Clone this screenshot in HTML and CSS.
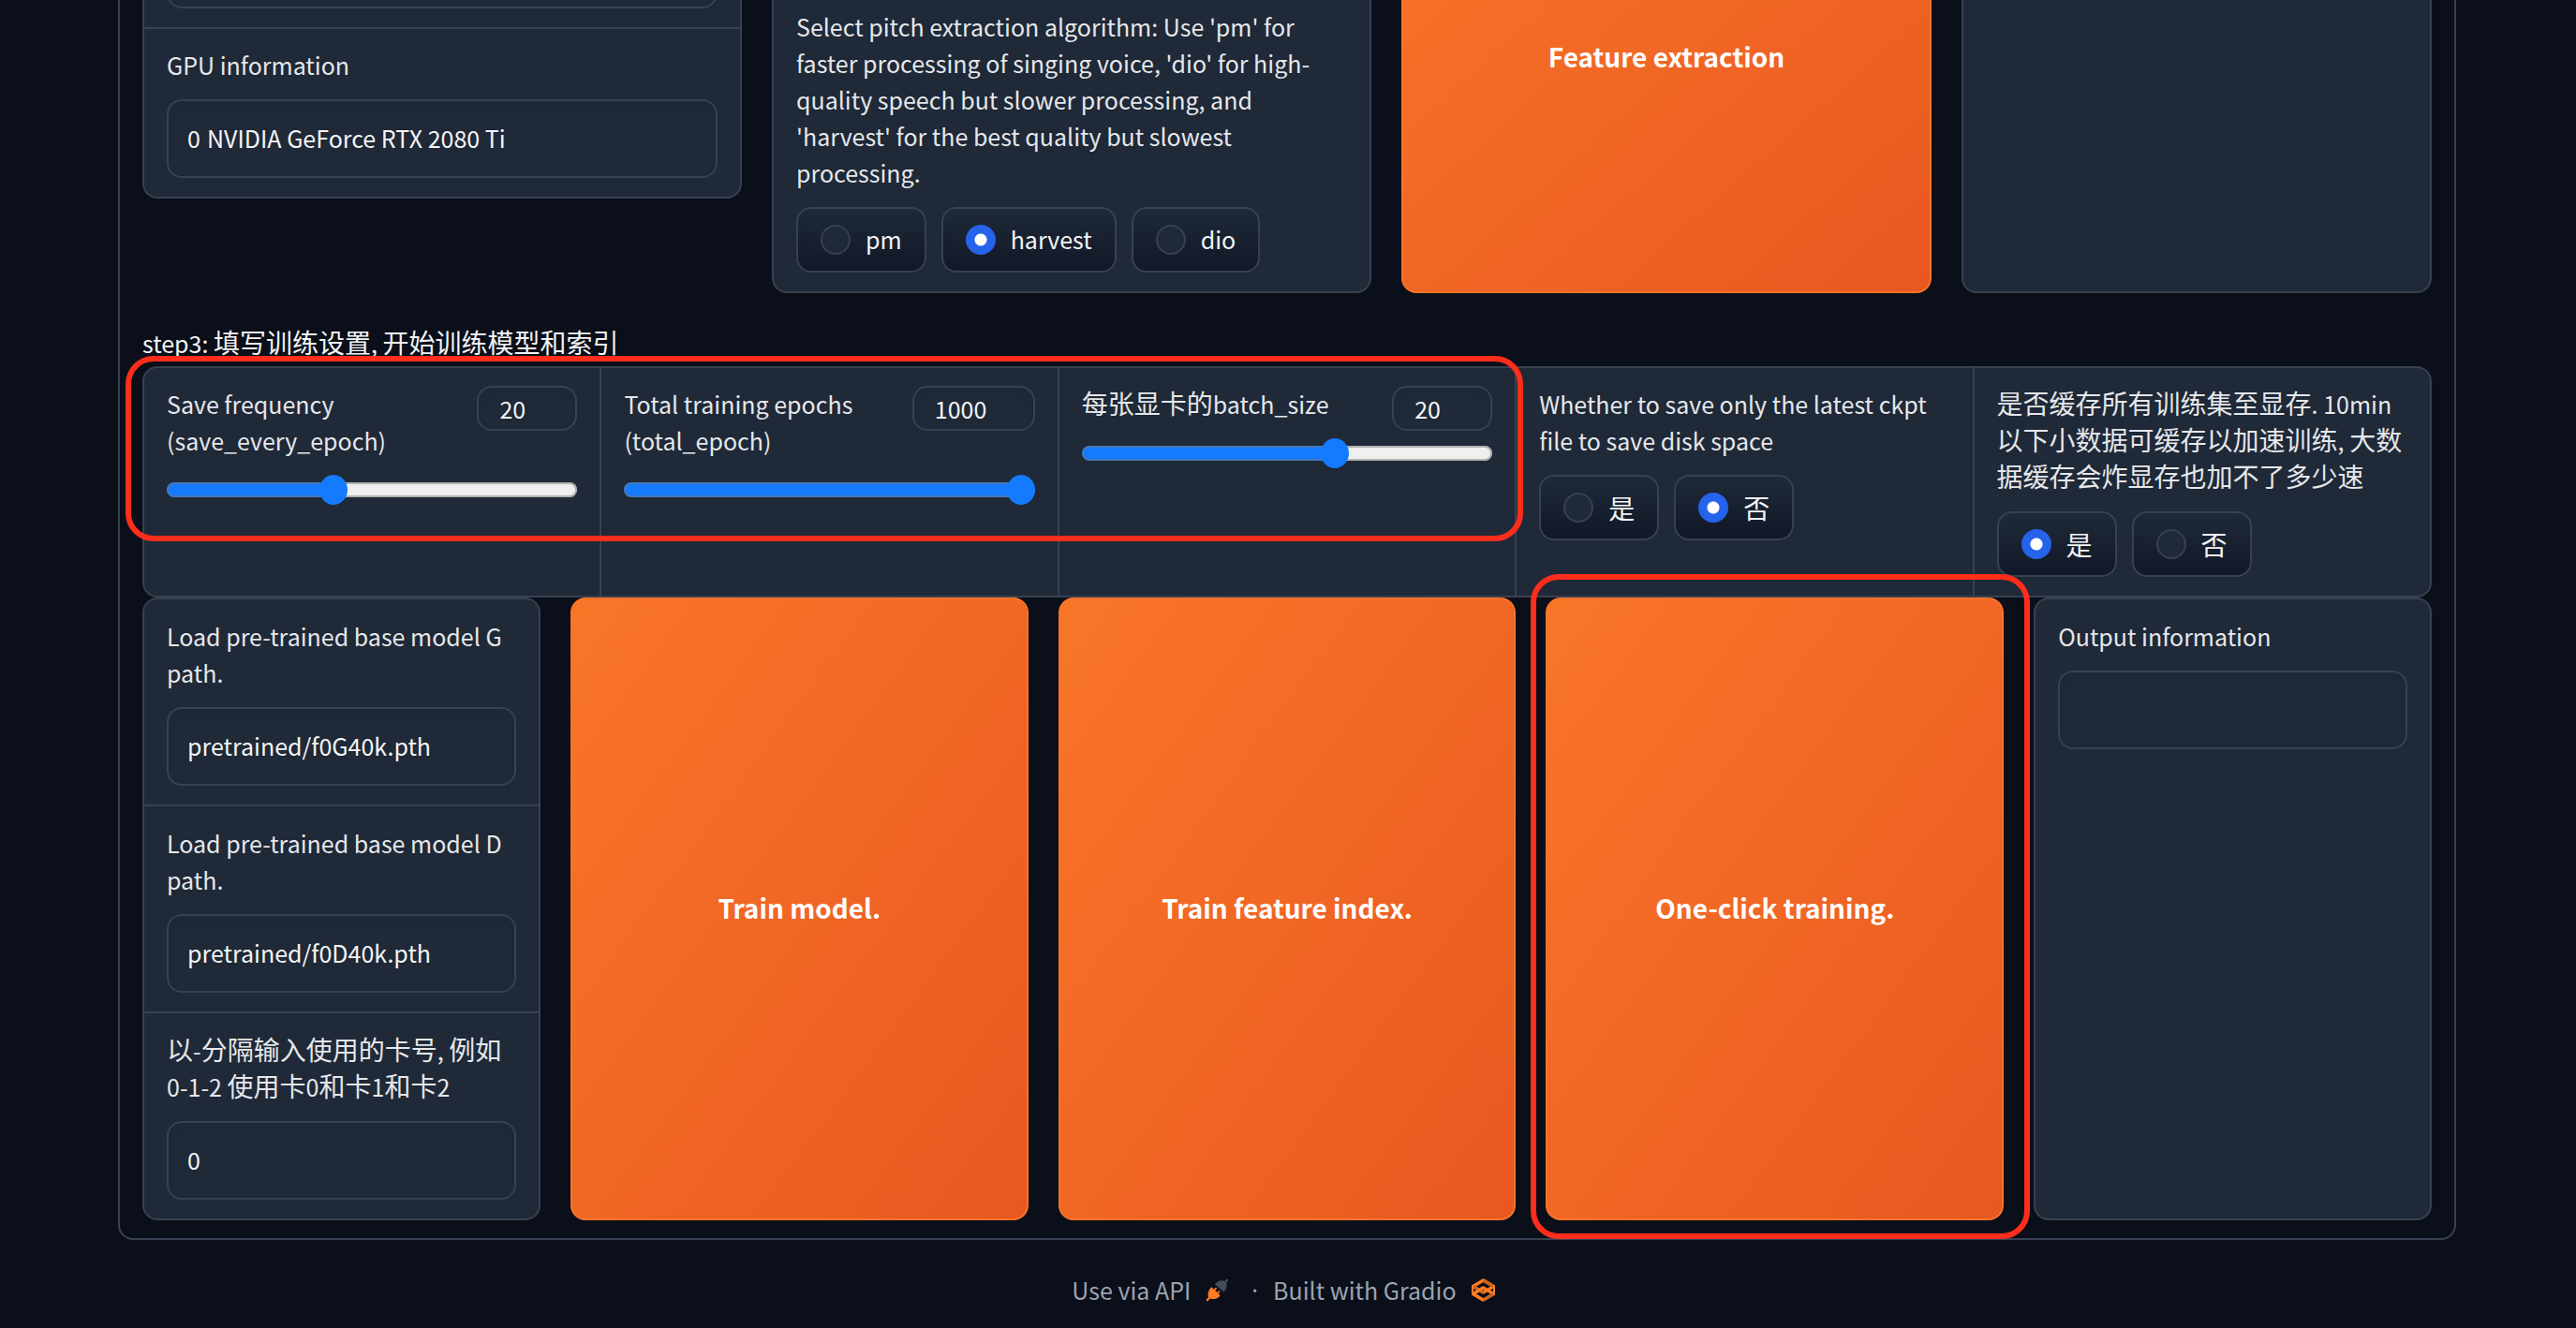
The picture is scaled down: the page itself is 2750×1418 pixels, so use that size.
FILE: index.html
```
<!DOCTYPE html>
<html lang="en">
<head>
<meta charset="utf-8">
<title>Train</title>
<link rel="stylesheet" href="styles.css">
</head>
<body>
<main class="panel">
  <section class="row row-extract">
    <div class="card card-start">
      <div class="block block-tall">
        <input class="field" type="text" readonly aria-labelledby="gpu-label">
      </div>
      <div class="block">
        <label class="label" id="gpu-label" for="gpu">GPU information</label>
        <input class="field" id="gpu" type="text" readonly value="0&nbsp;&hairsp;NVIDIA GeForce RTX 2080 Ti">
      </div>
    </div>
    <div class="card">
      <div class="block block-end" role="radiogroup" aria-labelledby="f0-label">
        <span class="label" id="f0-label">Select pitch extraction algorithm: Use 'pm' for faster processing of singing voice, 'dio' for high-quality speech but slower processing, and 'harvest' for the best quality but slowest processing.</span>
        <div class="choices">
          <label class="choice"><input type="radio" name="f0">pm</label>
          <label class="choice"><input type="radio" name="f0" checked>harvest</label>
          <label class="choice"><input type="radio" name="f0">dio</label>
        </div>
      </div>
    </div>
    <button class="primary" type="button">Feature extraction</button>
    <div class="card"><div class="block"></div></div>
  </section>

  <p class="step">step3: <span class="zh">填写训练设置</span>, <span class="zh">开始训练模型和索引</span></p>

  <section class="settings">
    <div class="block">
      <div class="slider-head">
        <label class="label" id="save-label" for="save-range">Save frequency (save_every_epoch)</label>
        <input class="number" type="number" value="20" aria-labelledby="save-label">
      </div>
      <input class="range" id="save-range" type="range" min="0" max="50" value="20" style="--fill: 40%">
    </div>
    <div class="block">
      <div class="slider-head">
        <label class="label" id="total-label" for="total-range">Total training epochs (total_epoch)</label>
        <input class="number number-wide" type="number" value="1000" aria-labelledby="total-label">
      </div>
      <input class="range" id="total-range" type="range" min="0" max="1000" value="1000" style="--fill: 100%">
    </div>
    <div class="block">
      <div class="slider-head">
        <label class="label" id="batch-label" for="batch-range"><span class="zh">每张显卡的</span>batch_size</label>
        <input class="number" type="number" value="20" aria-labelledby="batch-label">
      </div>
      <input class="range" id="batch-range" type="range" min="0" max="32" value="20" style="--fill: 62%">
    </div>
    <div class="block" role="radiogroup" aria-labelledby="latest-label">
      <span class="label" id="latest-label">Whether to save only the latest ckpt file to save disk space</span>
      <div class="choices">
        <label class="choice zh"><input type="radio" name="latest">是</label>
        <label class="choice zh"><input type="radio" name="latest" checked>否</label>
      </div>
    </div>
    <div class="block" role="radiogroup" aria-labelledby="cache-label">
      <span class="label" id="cache-label"><span class="zh">是否缓存所有训练集至显存</span>. 10min<span class="zh">以下小数据可缓存以加速训练</span>, <span class="zh">大数据缓存会炸显存也加不了多少速</span></span>
      <div class="choices">
        <label class="choice zh"><input type="radio" name="cache" checked>是</label>
        <label class="choice zh"><input type="radio" name="cache">否</label>
      </div>
    </div>
    <div class="mark mark-sliders"></div>
  </section>

  <section class="row row-train">
    <div class="card">
      <div class="block">
        <label class="label" for="base-g">Load pre-trained base model G path.</label>
        <input class="field" id="base-g" type="text" value="pretrained/f0G40k.pth">
      </div>
      <div class="block">
        <label class="label" for="base-d">Load pre-trained base model D path.</label>
        <input class="field" id="base-d" type="text" value="pretrained/f0D40k.pth">
      </div>
      <div class="block">
        <label class="label" for="cards"><span class="zh">以</span>-<span class="zh">分隔输入使用的卡号</span>, <span class="zh">例如</span> 0-1-2 <span class="zh">使用卡</span>0<span class="zh">和卡</span>1<span class="zh">和卡</span>2</label>
        <input class="field" id="cards" type="text" value="0">
      </div>
    </div>
    <button class="primary" type="button">Train model.</button>
    <button class="primary" type="button">Train feature index.</button>
    <div class="marked">
      <button class="primary" type="button">One-click training.</button>
      <div class="mark mark-button"></div>
    </div>
    <div class="card">
      <div class="block">
        <label class="label" for="output">Output information</label>
        <input class="field" id="output" type="text" readonly>
      </div>
    </div>
  </section>
</main>

<footer class="footer">
  <a class="footer-link" href="#api">Use via API
    <svg class="icon" viewBox="0 0 24 24" aria-hidden="true">
      <path fill="#434b5c" d="M9.500 6C12 2.500 16 1.500 19.500 2.800L22 .3l1.600 1.500-2.400 2.500C22.500 8 21 11.500 18.500 14z"/>
      <path fill="#ff7c23" d="M6.200 8.800 8.500 11.200 10.500 9 11.800 10.200 9.800 12.400 11.800 14.500 13.800 12.400 15 13.600 13 15.700 15 17.500C12.500 21 8 22 4.600 20.600L2 23.800.4 22.300 3 19.300C1.800 15.500 3.200 11.500 6.200 8.800z"/>
    </svg>
  </a>
  <span class="dot">·</span>
  <a class="footer-link" href="#gradio">Built with Gradio
    <svg class="icon" viewBox="0 0 24 24" aria-hidden="true">
      <g fill="none" stroke-width="3.200" stroke-linejoin="bevel">
        <path stroke="#ff7c23" d="M12 9.600 1.500 15.900 12 22.200 22.500 15.900z"/>
        <path stroke="#c9651f" d="M22.500 15.900 12 22.200"/>
        <path stroke="#ff7c23" d="M12 1.900 1.500 8.200 12 14.500 22.500 8.200z"/>
        <path stroke="#c9651f" d="M12 1.900 22.500 8.200M1.500 8.200 12 14.500"/>
        <path stroke="#ff7c23" d="M1.500 15.900 12 9.600M1.500 15.900 12 22.200"/>
      </g>
      <path fill="#ff7c23" d="M0 7h2v10H0zM22 7h2v10h-2z"/>
    </svg>
  </a>
</footer>
</body>
</html>
```
FILE: styles.css
```
* { box-sizing: border-box; }

body {
  display: flex;
  flex-direction: column;
  margin: 0;
  padding: 0 128px 0 126px;
  background: #0b0f19;
  color: #f3f4f6;
  font: 25px/39px "Noto Sans CJK SC", sans-serif;
}

input, button { font: inherit; color: inherit; }

.zh { font-size: 28px; line-height: 1; }

.panel {
  margin-top: -217px;
  padding: 24px 24px 19px;
  border: 2px solid #374151;
  border-radius: 16px;
}

.row { display: grid; gap: 32px; }
.row-extract { grid-template-columns: minmax(0, 640fr) minmax(0, 640fr) minmax(0, 566fr) minmax(0, 502fr); height: 504px; }
.row-train { grid-template-columns: minmax(0, 425fr) repeat(3, minmax(0, 489fr)) minmax(0, 425fr); }

.card, .settings {
  background: #374151;
  border: 2px solid #374151;
  border-radius: 16px;
}
.card { display: flex; flex-direction: column; gap: 2px; }
.card-start { align-self: start; }

.block {
  min-width: 0;
  padding: 19px 24px 20px;
  background: #1f2937;
}
.row-train .block { padding-top: 20px; }
.card .block:first-child { border-top-left-radius: 14px; border-top-right-radius: 14px; }
.card .block:last-child { flex: 1; border-bottom-left-radius: 14px; border-bottom-right-radius: 14px; }
.block-tall { display: flex; align-items: flex-end; min-height: 218px; }
.block-end { display: flex; flex-direction: column; justify-content: flex-end; }

.label {
  display: block;
  margin: 0 0 17px;
  color: #e5e7eb;
}

.field, .number {
  display: block;
  border: 2px solid #374151;
  border-radius: 16px;
  background: #1f2937;
  box-shadow: inset 0 4px 8px rgba(0, 0, 0, 0.05);
}
.field { width: 100%; height: 84px; padding: 0 20px 2px; }
.number { flex: none; width: 107px; height: 48px; padding: 0 22px; appearance: textfield; }
.number-wide { width: 131px; }
.number::-webkit-inner-spin-button { display: none; }

.step { margin: 30px 0 2px; line-height: 46px; }

.settings {
  position: relative;
  display: grid;
  grid-template-columns: repeat(5, minmax(0, 1fr));
  gap: 2px;
}
.settings .block:first-child { border-radius: 14px 0 0 14px; }
.settings .block:nth-child(5) { border-radius: 0 14px 14px 0; }

.slider-head { display: flex; justify-content: space-between; align-items: flex-start; gap: 16px; }

.range { display: block; width: 100%; height: 32px; margin: 0; appearance: none; background: none; }
.range::-webkit-slider-runnable-track {
  height: 16px;
  border-radius: 8px;
  background: linear-gradient(to right, #147bff var(--fill), #efefef var(--fill));
  box-shadow: inset 0 0 0 2px rgba(118, 118, 118, 0.5);
}
.range::-webkit-slider-thumb {
  width: 30px;
  height: 32px;
  margin-top: -8px;
  appearance: none;
  border-radius: 50%;
  background: #147bff;
}

.choices { display: flex; flex-wrap: wrap; gap: 16px; }
.choice {
  display: flex;
  align-items: center;
  gap: 16px;
  height: 70px;
  padding: 0 24px 1px;
  border: 2px solid #374151;
  border-radius: 16px;
  background: linear-gradient(to bottom, #1f2937, #111827);
}
.choice input {
  width: 32px;
  height: 32px;
  margin: 0;
  appearance: none;
  border: 2px solid #374151;
  border-radius: 50%;
  background: #1f2937;
}
.choice input:checked {
  border-color: #2563eb;
  background: radial-gradient(circle, #fff 6px, #2563eb 7px);
}

.primary {
  width: 100%;
  height: 100%;
  padding: 0 0 2px;
  border: 2px solid #f97429;
  border-radius: 16px;
  background: linear-gradient(to bottom right, #f97629, #e85720);
  color: #fff;
  font-size: 28px;
  font-weight: 700;
}

.marked { position: relative; }
.mark {
  position: absolute;
  border: 6px solid #ff2d1c;
  border-radius: 30px;
  pointer-events: none;
}
.mark-sliders { top: -13px; bottom: 58px; left: -20px; right: 968px; }
.mark-button { top: -25px; bottom: -20px; left: -16px; right: -28px; }

.footer {
  display: flex;
  justify-content: center;
  align-items: center;
  gap: 16px;
  padding: 34px 8px 20px 0;
  color: #9ca3af;
}
.footer-link { display: flex; align-items: center; gap: 16px; color: inherit; text-decoration: none; }
.dot { margin-left: 8px; font-family: "Noto Sans", sans-serif; }
.icon { width: 25px; height: 25px; }
```
